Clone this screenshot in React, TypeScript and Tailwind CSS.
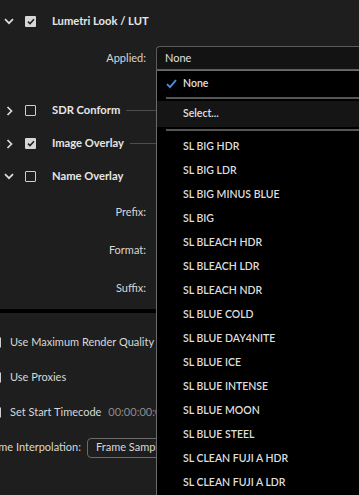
import React from "react";

const font = { fontFamily: "Lato, 'Noto Sans', sans-serif" };

const Box = ({ checked }: { checked?: boolean }) =>
  checked ? (
    <div className="w-[11px] h-[11px] shrink-0 rounded-[1px] bg-[#d6d6d6] flex items-center justify-center">
      <svg width="8" height="7" viewBox="0 0 8 7">
        <path d="M1 3.6 L3 5.6 L7 1.2" fill="none" stroke="#1e1e1e" strokeWidth="1.5" />
      </svg>
    </div>
  ) : (
    <div className="w-[11px] h-[11px] shrink-0 rounded-[1px] border-[1.5px] border-[#cfcfcf]" />
  );

const Chevron = ({ open }: { open?: boolean }) => (
  <div className="w-[18px] flex justify-center">
    {open ? (
      <svg width="10" height="7" viewBox="0 0 10 7">
        <path d="M1 1.2 L5 5.2 L9 1.2" fill="none" stroke="#dcdcdc" strokeWidth="1.7" />
      </svg>
    ) : (
      <svg width="7" height="10" viewBox="0 0 7 10">
        <path d="M1.5 1 L5.5 5 L1.5 9" fill="none" stroke="#dcdcdc" strokeWidth="1.7" />
      </svg>
    )}
  </div>
);

const Section = ({ label, open, checked, line }: { label: string; open?: boolean; checked?: boolean; line?: boolean }) => (
  <div className="h-[33px] flex items-center">
    <Chevron open={open} />
    <div className="ml-[7px]">
      <Box checked={checked} />
    </div>
    <span className="ml-[16px] text-[11.2px] font-bold text-[#e6e6e6] whitespace-nowrap">{label}</span>
    {line && <div className="flex-1 h-px bg-[#4c4c4c] ml-[6px]" />}
  </div>
);

const Field = ({ label }: { label: string }) => (
  <div className="h-[38px] flex items-center">
    <div className="w-[146px] text-right text-[11px] text-[#d6d6d6]">{label}</div>
  </div>
);

const Option = ({ label }: { label: string }) => (
  <div className="h-[24px] flex items-center pl-[26px] text-[10.5px] font-semibold text-[#dedede] whitespace-nowrap">
    {label}
  </div>
);

const looks = [
  "SL BIG HDR",
  "SL BIG LDR",
  "SL BIG MINUS BLUE",
  "SL BIG",
  "SL BLEACH HDR",
  "SL BLEACH LDR",
  "SL BLEACH NDR",
  "SL BLUE COLD",
  "SL BLUE DAY4NITE",
  "SL BLUE ICE",
  "SL BLUE INTENSE",
  "SL BLUE MOON",
  "SL BLUE STEEL",
  "SL CLEAN FUJI A HDR",
  "SL CLEAN FUJI A LDR",
];

export default function App() {
  return (
    <div className="relative w-[359px] h-[495px] overflow-hidden bg-[#1e1e1e]" style={font}>
      <div className="h-[42px] flex items-center">
        <Chevron open />
        <div className="ml-[7px]">
          <Box checked />
        </div>
        <span className="ml-[16px] text-[11.2px] font-bold text-[#e6e6e6]">Lumetri Look / LUT</span>
      </div>

      <div className="mt-[4px] h-[24px] flex items-center">
        <div className="w-[146px] text-right text-[11px] text-[#d6d6d6]">Applied:</div>
        <div className="ml-[10px] flex-1 h-[24px] flex items-center pl-[8px] border border-r-0 border-[#5c5c5c] rounded-tl-[4px] bg-[#131313] text-[11px] text-[#e0e0e0]">
          None
        </div>
      </div>

      <div className="pt-[24px]">
        <Section label="SDR Conform" line />
        <Section label="Image Overlay" checked line />
        <Section label="Name Overlay" open />
      </div>

      <Field label="Prefix:" />
      <Field label="Format:" />
      <Field label="Suffix:" />

      <div className="mt-[2px] h-[4px] bg-black" />

      <div className="pt-[12px] text-[11px] text-[#d8d8d8]">
        <div className="h-[35px] flex items-center ml-[-10px]">
          <Box />
          <span className="ml-[9px] whitespace-nowrap">Use Maximum Render Quality</span>
        </div>
        <div className="h-[35px] flex items-center ml-[-10px]">
          <Box />
          <span className="ml-[9px] whitespace-nowrap">Use Proxies</span>
        </div>
        <div className="h-[35px] flex items-center ml-[-10px]">
          <Box />
          <span className="ml-[9px] whitespace-nowrap">Set Start Timecode</span>
          <span className="ml-[7px] text-[#8c8c8c] whitespace-nowrap">00:00:00:00</span>
        </div>
        <div className="h-[35px] flex items-center">
          <div className="w-[81px] shrink-0 flex justify-end">
            <span className="whitespace-nowrap">Frame Interpolation:</span>
          </div>
          <div className="ml-[6px] h-[20px] w-[140px] shrink-0 flex items-center pl-[8px] border border-[#6a6a6a] rounded-[4px] whitespace-nowrap">
            Frame Sampling
          </div>
        </div>
      </div>

      <div className="absolute left-[156px] top-[70px] right-0 bottom-0 bg-black border-l border-t border-[#6a6a6a]">
        <div className="h-[26px] flex items-center pl-[9px] text-[10.5px] font-semibold text-[#e0e0e0]">
          <svg width="11" height="10" viewBox="0 0 11 10">
            <path d="M1 5.2 L4 8.2 L10 1.2" fill="none" stroke="#4b8ee3" strokeWidth="1.8" />
          </svg>
          <span className="ml-[6px]">None</span>
        </div>
        <div className="ml-[9px] h-[2px] bg-[#555555]" />
        <div className="mt-[2px] h-[26px] flex items-center pl-[26px] bg-[#151515] text-[10.5px] font-semibold text-[#e0e0e0]">
          Select...
        </div>
        <div className="mt-[2px] ml-[9px] h-[2px] bg-[#555555]" />
        <div className="pt-[4px]">
          {looks.map((l) => (
            <Option key={l} label={l} />
          ))}
        </div>
      </div>
    </div>
  );
}
